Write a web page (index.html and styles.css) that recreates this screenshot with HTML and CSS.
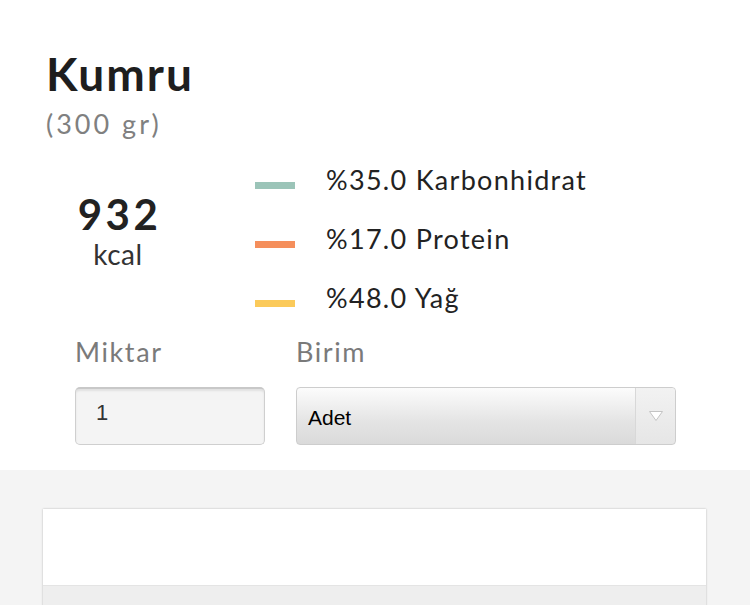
FILE: index.html
```html
<!DOCTYPE html>
<html>
<head>
<meta charset="utf-8">
<link rel="stylesheet" href="styles.css">
</head>
<body>
<div class="top">
  <h1 class="title">Kumru</h1>
  <div class="portion">(300 gr)</div>
  <div class="summary">
    <div class="kcal">
      <div class="kcal-num">932</div>
      <div class="kcal-unit">kcal</div>
    </div>
    <ul class="legend">
      <li><span class="bar bar-carb"></span><span class="ltext">%35.0 Karbonhidrat</span></li>
      <li><span class="bar bar-prot"></span><span class="ltext">%17.0 Protein</span></li>
      <li><span class="bar bar-fat"></span><span class="ltext">%48.0 Yağ</span></li>
    </ul>
  </div>
  <div class="form">
    <div class="field field-qty">
      <div class="label">Miktar</div>
      <div class="input">1</div>
    </div>
    <div class="field field-unit">
      <div class="label">Birim</div>
      <div class="select"><span class="select-text">Adet</span><span class="select-arrow"><svg width="16" height="12" viewBox="0 0 16 12"><path d="M1.5 1.5 L14.5 1.5 L8 10.5 Z" fill="#fff" stroke="#c4c4c4" stroke-width="1"/></svg></span></div>
    </div>
  </div>
</div>
<div class="bottom">
  <div class="card">
    <div class="card-body"></div>
    <div class="card-foot"></div>
  </div>
</div>
</body>
</html>
```
FILE: styles.css
```css
* { box-sizing: border-box; }
html, body { margin: 0; padding: 0; }
body { background: #f4f4f4; font-family: "Lato", "DejaVu Sans", sans-serif; color: #222; }
.top { background: #fff; padding: 44px 0 0 46px; height: 470px; }
.title { margin: 0; font-size: 46px; font-weight: 700; line-height: 60px; color: #1e1e1e; letter-spacing: 2px; }
.portion { font-size: 27px; color: #808080; line-height: 32px; margin-top: 4px; letter-spacing: 3px; }
.summary { display: flex; margin-top: 22px; }
.kcal { width: 144px; margin-right: 65px; display: flex; flex-direction: column; align-items: center; padding-top: 33px; }
.kcal-num { font-size: 42px; font-weight: 700; line-height: 38px; color: #222; letter-spacing: 3.5px; padding-left: 3px; }
.kcal-unit { font-size: 28px; line-height: 30px; color: #333; letter-spacing: 0.5px; margin-top: 6px; }
.legend { list-style: none; margin: 0; padding: 0; }
.legend li { display: flex; align-items: center; height: 59px; }
.legend li:first-child { margin-top: -6px; }
.bar { width: 40px; height: 7px; margin-right: 31px; }
.bar-carb { background: #9bc4b8; }
.bar-prot { background: #f58f5c; }
.bar-fat { background: #fbca5a; }
.ltext { font-size: 27px; color: #222; letter-spacing: 1.3px; margin-top: -12px; }
.form { display: flex; margin-top: 3px; padding-left: 29px; }
.label { font-size: 27px; color: #7a7a7a; line-height: 32px; margin-bottom: 19px; letter-spacing: 1.6px; }
.field-qty { width: 221px; }
.input { width: 190px; height: 58px; border: 1px solid #cfcfcf; border-top: 2px solid #c8c8c8; border-radius: 5px; background: #f4f4f4; box-shadow: inset 0 2px 2px rgba(0,0,0,0.08); font-family: "Liberation Sans", sans-serif; font-size: 22px; line-height: 25px; color: #333; padding: 11px 0 0 20px; }
.select { width: 380px; height: 58px; border: 1px solid #cdcdcd; border-radius: 4px; background: linear-gradient(#fcfcfc, #e4e4e4 60%, #dadada); display: flex; align-items: center; }
.select-text { font-family: "Liberation Sans", sans-serif; font-size: 21px; color: #000; padding: 3px 0 0 11px; flex: 1; }
.select-arrow { width: 40px; align-self: stretch; border-left: 1px solid #d8d8d8; background: linear-gradient(#f2f2f2, #e6e6e6); border-radius: 0 4px 4px 0; display: flex; align-items: center; justify-content: center; }
.bottom { padding: 39px 44px 0 43px; }
.card { background: #fff; box-shadow: 0 0 2px rgba(0,0,0,0.25); }
.card-body { height: 76px; }
.card-foot { height: 30px; background: #eee; border-top: 1px solid #e4e4e4; }
```
